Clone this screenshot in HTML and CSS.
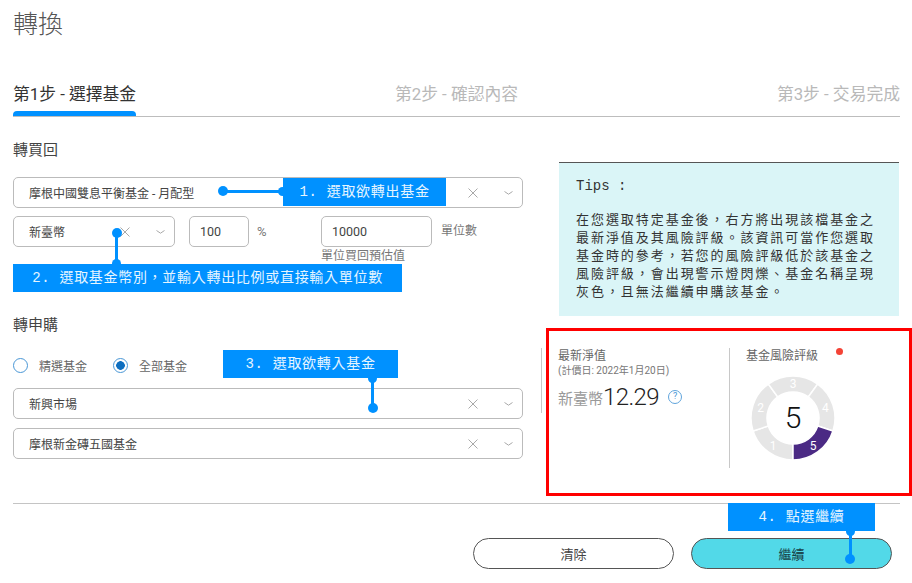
FILE: index.html
```html
<!DOCTYPE html>
<html lang="zh-Hant">
<head>
    <meta charset="UTF-8">
    <title>轉換</title>
    <link rel="stylesheet" href="styles.css">
</head>
<body>
<div class="page">
    <svg class="icon-defs" width="0" height="0">
        <symbol id="i-x" viewBox="0 0 10 10"><path d="M.5.5l9 9M9.500.5l-9 9" fill="none" stroke="#a9a9a9" stroke-width="1"/></symbol>
        <symbol id="i-down" viewBox="0 0 9 4"><path d="M.5.5L4.500 3.200 8.500.5" fill="none" stroke="#a9a9a9" stroke-width="1"/></symbol>
    </svg>

    <h1 class="title">轉換</h1>

    <div class="steps">
        <div class="step active">第1步 - 選擇基金</div>
        <div class="step">第2步 - 確認內容</div>
        <div class="step">第3步 - 交易完成</div>
    </div>

    <div class="content">
        <div class="form">
            <h2>轉買回</h2>
            <div class="select">
                <span class="select-text">摩根中國雙息平衡基金 - 月配型</span>
                <svg class="ic-x"><use href="#i-x"/></svg>
                <svg class="ic-down"><use href="#i-down"/></svg>
            </div>
            <div class="amount-row">
                <div class="select select-currency">
                    <span class="select-text">新臺幣</span>
                    <svg class="ic-x"><use href="#i-x"/></svg>
                    <svg class="ic-down"><use href="#i-down"/></svg>
                </div>
                <div class="field field-pct">100</div>
                <span class="unit unit-pct">%</span>
                <div class="units">
                    <div class="units-top">
                        <div class="field field-units">10000</div>
                        <span class="unit">單位數</span>
                    </div>
                    <div class="helper">單位買回預估值</div>
                </div>
            </div>

            <h2 class="h-buy">轉申購</h2>
            <div class="radios">
                <label class="radio"><span class="dot"></span>精選基金</label>
                <label class="radio on"><span class="dot"></span>全部基金</label>
            </div>
            <div class="select">
                <span class="select-text">新興市場</span>
                <svg class="ic-x"><use href="#i-x"/></svg>
                <svg class="ic-down"><use href="#i-down"/></svg>
            </div>
            <div class="select select-next">
                <span class="select-text">摩根新金磚五國基金</span>
                <svg class="ic-x"><use href="#i-x"/></svg>
                <svg class="ic-down"><use href="#i-down"/></svg>
            </div>
        </div>

        <div class="side">
            <div class="tips">
                <div class="tips-head">Tips :</div>
                <p>在您選取特定基金後，右方將出現該檔基金之最新淨值及其風險評級。該資訊可當作您選取基金時的參考，若您的風險評級低於該基金之風險評級，會出現警示燈閃爍、基金名稱呈現灰色，且無法繼續申購該基金。</p>
            </div>
            <div class="fund">
                <div class="fund-nav">
                    <div class="nav-label">最新淨值</div>
                    <div class="nav-date">(計價日: 2022年1月20日)</div>
                    <div class="nav-value">
                        <span class="cur">新臺幣</span><span class="num">12.29</span><span class="help">?</span>
                    </div>
                </div>
                <div class="fund-risk">
                    <div class="risk-head">基金風險評級<span class="led"></span></div>
                    <svg class="donut" width="90" height="90" viewBox="0 0 90 90">
                        <g stroke="#fff" stroke-width="1.500">
                            <path class="seg" d="M45 87A42 42 0 0 1 5.050 57.980L20.270 53.030A26 26 0 0 0 45 71Z"/>
                            <path class="seg" d="M5.050 57.980A42 42 0 0 1 20.310 11.020L29.720 23.970A26 26 0 0 0 20.270 53.030Z"/>
                            <path class="seg" d="M20.310 11.020A42 42 0 0 1 69.690 11.020L60.280 23.970A26 26 0 0 0 29.720 23.970Z"/>
                            <path class="seg" d="M69.690 11.020A42 42 0 0 1 84.950 57.980L69.730 53.030A26 26 0 0 0 60.280 23.970Z"/>
                            <path class="seg-on" d="M84.950 57.980A42 42 0 0 1 45 87L45 71A26 26 0 0 0 69.730 53.030Z"/>
                        </g>
                        <text class="seg-num" x="25" y="77">1</text>
                        <text class="seg-num" x="12.700" y="39">2</text>
                        <text class="seg-num" x="45" y="15">3</text>
                        <text class="seg-num" x="77.300" y="39">4</text>
                        <text class="seg-num" x="65" y="77">5</text>
                        <text class="donut-num" x="45" y="55">5</text>
                    </svg>
                </div>
            </div>
        </div>
    </div>

    <div class="actions">
        <button class="btn">清除</button>
        <button class="btn btn-go">繼續</button>
    </div>

    <!-- annotations on top of the screenshot -->
    <div class="highlight"></div>

    <div class="callout c1">1. 選取欲轉出基金</div>
    <span class="lead-h l1"></span><span class="pin p1"></span>

    <div class="callout c2">2. 選取基金幣別，並輸入轉出比例或直接輸入單位數</div>
    <span class="lead-v l2"></span><span class="pin p2"></span>

    <div class="callout c3">3. 選取欲轉入基金</div>
    <span class="lead-v l3"></span><span class="pin p3"></span>

    <div class="callout c4">4. 點選繼續</div>
    <span class="lead-v l4"></span><span class="pin p4"></span>
</div>
</body>
</html>
```
FILE: styles.css
```css
* {
    box-sizing: border-box;
}

body {
    margin: 0;
    background-color: #fff;
    font-family: "Roboto", "Noto Sans CJK TC", sans-serif;
    color: #555;
}

.page {
    position: relative;
    width: 912px;
    height: 583px;
    padding: 13px 12px 0 13px;
    overflow: hidden;
}

.icon-defs {
    position: absolute;
}

.title {
    margin: 0;
    font-size: 25px;
    line-height: 24px;
    font-weight: 300;
    color: #555;
}

/* steps */
.steps {
    display: flex;
    justify-content: space-between;
    width: 887px;
    height: 34px;
    margin-top: 46px;
    border-bottom: 1px solid #bdbdbd;
}

.step {
    position: relative;
    font-size: 16.800px;
    line-height: 23px;
    color: #b9b9b9;
}

.step.active {
    color: #333;
}

.step.active::after {
    content: "";
    position: absolute;
    left: 0;
    right: 0;
    top: 28px;
    height: 5px;
    background-color: #0091ff;
    border-radius: 4px 4px 0 0;
}

.content {
    display: flex;
}

/* left form */
.form {
    width: 510px;
    padding-top: 24px;
}

h2 {
    margin: 0 0 18px;
    font-size: 15px;
    line-height: 18px;
    font-weight: 400;
    color: #444;
}

.select {
    display: flex;
    align-items: center;
    height: 31px;
    padding: 0 9px 0 15px;
    border: 1px solid #bbb;
    border-radius: 5px;
    font-size: 12px;
    color: #444;
}

.select-text {
    flex: 1;
}

.select-next {
    margin-top: 9px;
}

.ic-x {
    width: 10px;
    height: 10px;
}

.ic-down {
    width: 9px;
    height: 4px;
    margin-left: 26px;
}

.amount-row {
    display: flex;
    align-items: flex-start;
    margin-top: 8px;
    font-size: 12px;
}

.select-currency {
    width: 162px;
    flex: none;
}

.field {
    height: 31px;
    line-height: 29px;
    padding-left: 10px;
    border: 1px solid #bbb;
    border-radius: 5px;
    font-size: 12.500px;
    color: #444;
}

.field-pct {
    width: 60px;
    margin-left: 14px;
}

.field-units {
    width: 111px;
}

.unit {
    line-height: 31px;
    color: #777;
}

.unit-pct {
    width: 72px;
    padding-left: 8px;
    font-size: 13px;
}

.units-top {
    display: flex;
    gap: 9px;
}

.helper {
    margin-top: 1px;
    line-height: 16px;
    font-size: 12px;
    color: #777;
}

.h-buy {
    margin-top: 52px;
}

.radios {
    display: flex;
    gap: 26px;
    height: 16px;
    margin-top: 23px;
    margin-bottom: 15px;
    font-size: 12px;
}

.radio {
    display: flex;
    align-items: center;
    gap: 11px;
    height: 16px;
    color: #666;
}

.dot {
    width: 15px;
    height: 15px;
    border: 1.5px solid #4a97d6;
    border-radius: 50%;
}

.radio.on .dot {
    background: radial-gradient(circle, #0f6fc0 0 4px, #fff 4.6px);
}

/* right side */
.side {
    margin-left: 36px;
    padding-top: 45px;
}

.tips {
    width: 340px;
    height: 154px;
    padding: 15px 17px 0;
    background-color: #daf5f7;
    border-top: 1px solid #555;
    color: #333;
}

.tips-head {
    font-family: "Liberation Mono", monospace;
    font-size: 14px;
    line-height: 16px;
}

.tips p {
    margin: 16px 0 0;
    font-family: "Noto Sans CJK TC", sans-serif;
    font-size: 13px;
    line-height: 18px;
    letter-spacing: 1.95px;
}

.fund {
    display: flex;
    align-items: flex-start;
    margin: 32px 0 0 -18px;
}

.fund-nav {
    width: 188px;
    height: 65px;
    padding-left: 16px;
    border-left: 1px solid #c8c8c8;
}

.nav-label {
    font-size: 12px;
    line-height: 16px;
    color: #666;
}

.nav-date {
    font-size: 10px;
    line-height: 14px;
    color: #777;
}

.nav-value {
    display: flex;
    align-items: center;
    margin-top: 4px;
}

.cur {
    font-size: 15px;
    color: #999;
}

.num {
    font-size: 24px;
    line-height: 30px;
    font-weight: 300;
    letter-spacing: -.6px;
    color: #222;
}

.help {
    width: 14px;
    height: 14px;
    margin-left: 9px;
    border: 1.5px solid #5fa4dc;
    border-radius: 50%;
    font-size: 9px;
    line-height: 11px;
    text-align: center;
    color: #4a97d6;
}

.fund-risk {
    height: 120px;
    padding-left: 16px;
    border-left: 1px solid #c8c8c8;
}

.risk-head {
    display: flex;
    align-items: flex-start;
    font-size: 12px;
    line-height: 16px;
    color: #666;
}

.led {
    width: 7px;
    height: 7px;
    margin: 0 0 0 18px;
    background-color: #f44336;
    border-radius: 50%;
}

.donut {
    display: block;
    margin: 9px 0 0 2px;
}

.seg {
    fill: #e6e6e6;
}

.seg-on {
    fill: #4b2a84;
}

.seg-num {
    font-size: 12px;
    fill: #fff;
    text-anchor: middle;
}

.donut-num {
    font-size: 30px;
    font-weight: 300;
    fill: #111;
    text-anchor: middle;
}

/* bottom buttons */
.actions {
    position: absolute;
    top: 503px;
    display: flex;
    justify-content: flex-end;
    gap: 17px;
    width: 887px;
    padding: 34px 8px 0 0;
    border-top: 1px solid #c4c4c4;
}

.btn {
    width: 201px;
    height: 31px;
    padding: 0;
    background-color: #fff;
    border: 1px solid #555;
    border-radius: 16px;
    font-family: inherit;
    font-size: 13px;
    color: #444;
}

.btn-go {
    background-color: #52d9e8;
    color: #173f46;
}

/* annotations */
.highlight {
    position: absolute;
    left: 546px;
    top: 328px;
    width: 366px;
    height: 168px;
    border: 3px solid #f00;
}

.callout {
    position: absolute;
    height: 28px;
    font-family: "Liberation Mono", "Noto Sans CJK TC", monospace;
    font-size: 14px;
    line-height: 28px;
    letter-spacing: .7px;
    text-align: center;
    color: #e6f5ff;
    background-color: #0091ff;
}

.c1 { left: 283px; top: 178px; width: 163px; }
.c2 { left: 13px; top: 264px; width: 389px; }
.c3 { left: 223px; top: 350px; width: 175px; }
.c4 { left: 728px; top: 503px; width: 147px; }

.lead-h,
.lead-v,
.pin {
    position: absolute;
    background-color: #0091ff;
}

.pin {
    width: 10px;
    height: 10px;
    border-radius: 50%;
}

.lead-h { height: 3px; }
.lead-v { width: 3px; }

/* small blob where a leader meets its box */
.lead-h::after,
.lead-v::after {
    content: "";
    position: absolute;
    width: 9px;
    height: 9px;
    background-color: #0091ff;
    border-radius: 50%;
}

.lead-h::after { right: -4px; top: -3px; }
.lead-v::after { left: -3px; top: -4px; }
.l2::after { top: auto; bottom: -4px; }

.l1 { left: 223px; top: 190px; width: 60px; }
.p1 { left: 218px; top: 186px; }
.l2 { left: 115px; top: 233px; height: 31px; }
.p2 { left: 112px; top: 228px; }
.l3 { left: 371px; top: 378px; height: 30px; }
.p3 { left: 368px; top: 403px; }
.l4 { left: 849px; top: 531px; height: 28px; }
.p4 { left: 845px; top: 554px; }
```
